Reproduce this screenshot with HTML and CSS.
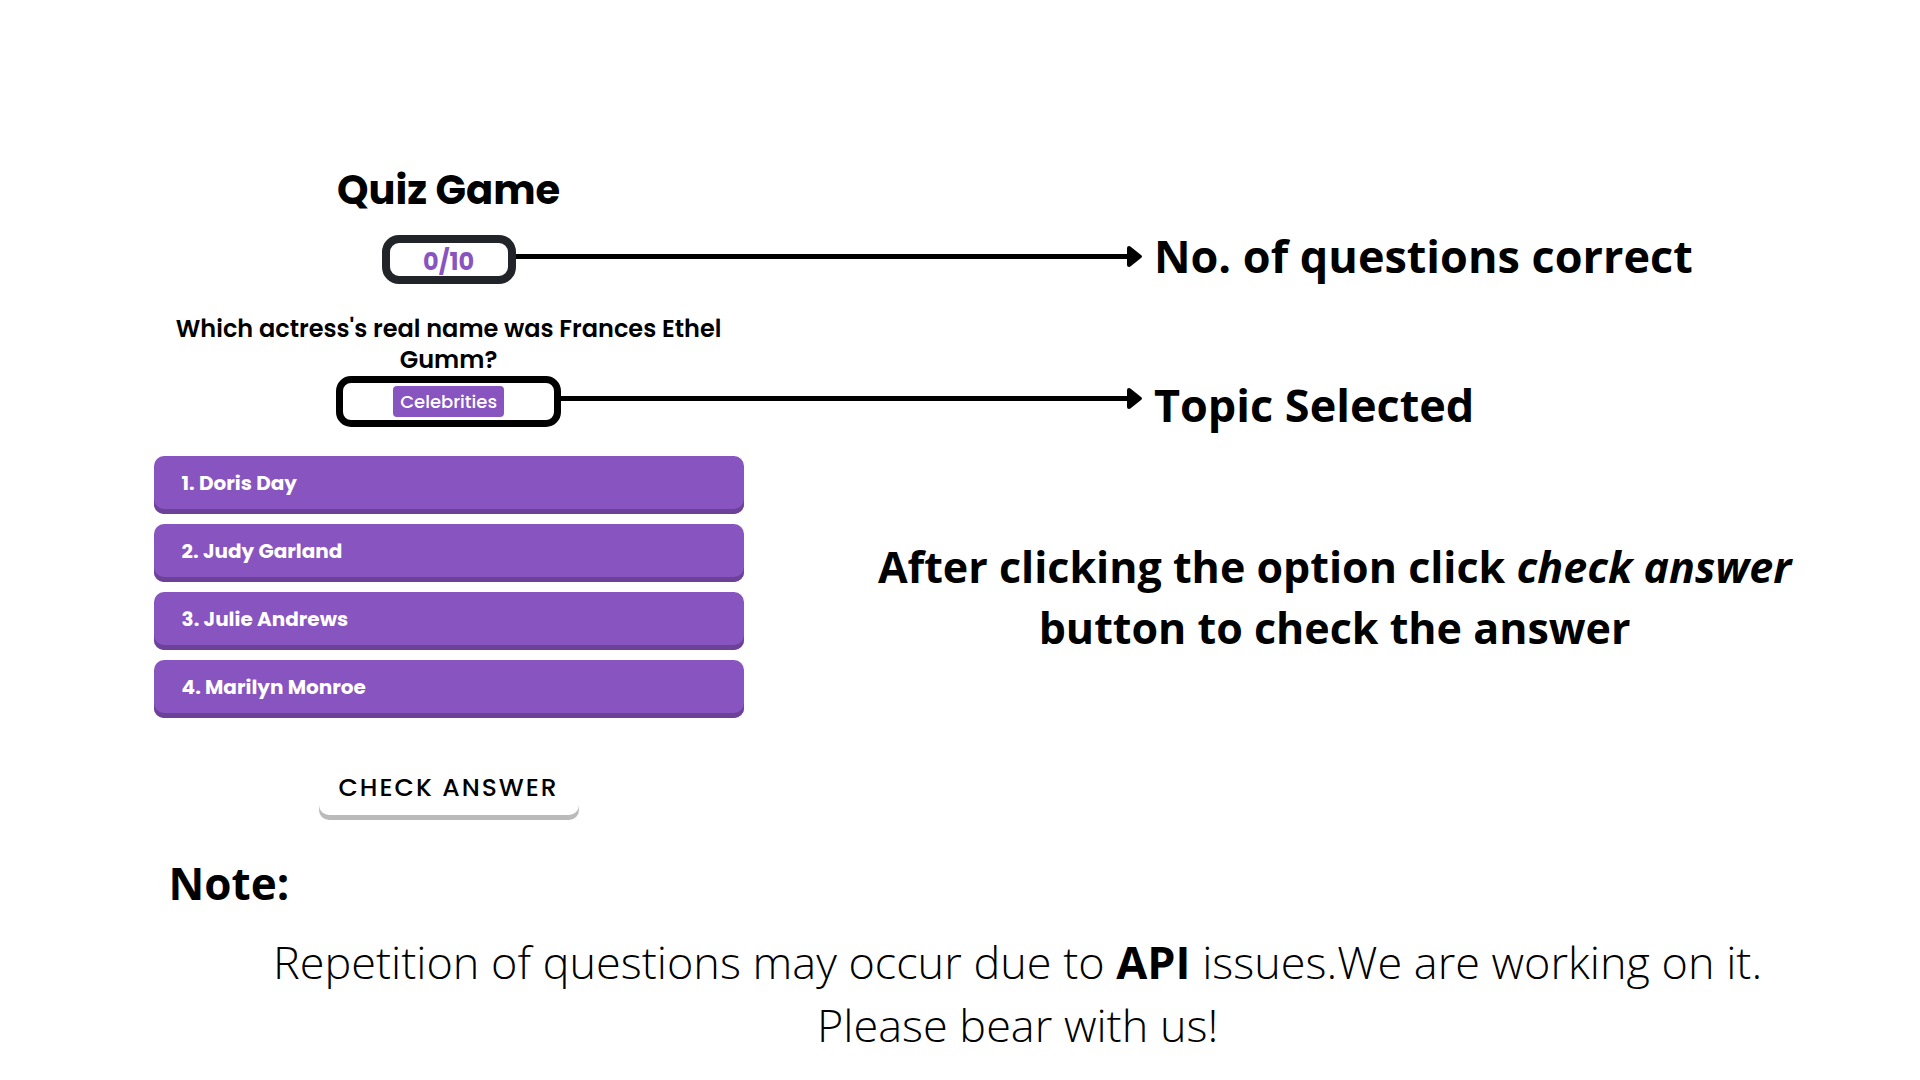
FILE: index.html
```html
<!DOCTYPE html>
<html lang="en">
<head>
<meta charset="utf-8">
<meta name="viewport" content="width=device-width, initial-scale=1">
<title>Quiz Game</title>
<link rel="stylesheet" href="styles.css">
</head>
<body>
<main class="guide">
  <section class="steps">
    <h1 class="title">Quiz Game</h1>

    <div class="score-row">
      <span class="pill pill-score">0/10</span>
      <span class="line"></span>
    </div>
    <div class="callout callout-score">
      <span class="arrow"><span class="line"></span><svg class="head" viewBox="0 0 15 21" aria-hidden="true"><path d="M0 2Q0 0 2 0Q3 0 4 1L14 9Q16 10.500 14 12L4 20Q3 21 2 21Q0 21 0 19Z"/></svg></span>
      <p class="label">No. of questions correct</p>
    </div>

    <h2 class="question">Which actress's real name was Frances Ethel Gumm?</h2>

    <div class="topic-row">
      <span class="pill pill-topic"><span class="tag">Celebrities</span></span>
      <span class="line"></span>
    </div>
    <div class="callout callout-topic">
      <span class="arrow"><span class="line"></span><svg class="head" viewBox="0 0 15 21" aria-hidden="true"><path d="M0 2Q0 0 2 0Q3 0 4 1L14 9Q16 10.500 14 12L4 20Q3 21 2 21Q0 21 0 19Z"/></svg></span>
      <p class="label">Topic Selected</p>
    </div>

    <div class="options">
      <button class="option" type="button">1. Doris Day</button>
      <button class="option" type="button">2. Judy Garland</button>
      <button class="option" type="button">3. Julie Andrews</button>
      <button class="option" type="button">4. Marilyn Monroe</button>
    </div>
    <p class="hint">After clicking the option click <em>check answer</em> <br>button to check the answer</p>

    <button class="check" type="button">CHECK ANSWER</button>
  </section>

  <section class="note">
    <h2 class="note-title">Note:</h2>
    <p class="note-text">Repetition of questions may occur due to <strong>API</strong> issues.We are working on it.<br>Please bear with us!</p>
  </section>
</main>
</body>
</html>
```
FILE: styles.css
```css
* {
  box-sizing: border-box;
}

body {
  margin: 0;
  background: #fff;
  color: #000;
  font-family: "Open Sans", sans-serif;
}

h1, h2, p {
  margin: 0;
}

.guide {
  padding: 160px 2% 0 8%;
}

.steps {
  display: grid;
  grid-template-columns: 590fr 1138fr;
  align-items: start;
}

.title,
.question,
.pill,
.tag,
.option,
.check {
  font-family: Poppins, Inter, sans-serif;
}

.title {
  grid-column: 1;
  font-size: 40px;
  line-height: 60px;
  font-weight: 700;
  text-align: center;
}

.score-row,
.topic-row {
  grid-column: 1;
  display: grid;
  grid-template-columns: 1fr auto 1fr;
  align-items: start;
}

.score-row {
  margin-top: 15px;
}

.topic-row {
  margin-top: 1px;
}

.score-row .pill,
.topic-row .pill {
  grid-column: 2;
}

.pill {
  display: flex;
  align-items: center;
  justify-content: center;
}

.pill-score {
  width: 134px;
  height: 49px;
  padding-top: 3px;
  border: 8px solid #212529;
  border-radius: 17px;
  color: #8854c0;
  font-size: 24px;
  font-weight: 700;
}

.pill-topic {
  width: 225px;
  height: 51px;
  border: 7px solid #000;
  border-radius: 15px;
}

.tag {
  padding: 0 7px;
  border-radius: 4px;
  background: #8854c0;
  color: #fff;
  font-size: 18px;
  line-height: 31px;
  font-weight: 500;
}

.line {
  flex: 1;
  height: 5px;
  background: #000;
}

.score-row .line {
  margin-top: 19px;
}

.topic-row .line {
  margin-top: 20px;
}

.callout {
  display: flex;
  align-items: start;
  gap: 12px;
}

.arrow {
  flex: 0 0 35%;
  display: flex;
  align-items: center;
}

.callout-score {
  padding-top: 6px;
}

.callout-score .arrow {
  margin-top: 20px;
}

.callout-topic .arrow {
  margin-top: 13px;
}

.head {
  width: 15px;
  height: 21px;
}

.label,
.hint,
.note-title {
  line-height: 61px;
  font-weight: 700;
}

.label {
  padding-bottom: 2px;
  font-size: 45px;
  line-height: 59px;
}

.question {
  grid-column: 1;
  margin-top: 26px;
  font-size: 24px;
  line-height: 31px;
  font-weight: 600;
  text-align: center;
}

.options {
  display: grid;
  gap: 10px;
  margin-top: 20px;
}

.option {
  height: 58px;
  padding: 0 28px 5px;
  border: 0;
  border-radius: 10px;
  background: #8854c0;
  box-shadow: inset 0 -5px #6c4298;
  color: #fff;
  font-size: 20px;
  font-weight: 700;
  text-align: left;
}

.hint {
  align-self: center;
  padding: 40px 0 0 44px;
  font-size: 43px;
  text-align: center;
}

.check {
  grid-column: 1;
  justify-self: center;
  height: 65px;
  margin-top: 37px;
  padding: 1px 20px 0;
  border: 0;
  border-radius: 10px;
  background: #fff;
  box-shadow: inset 0 -5px #bababa;
  color: #000;
  font-size: 25px;
  font-weight: 500;
  letter-spacing: 2px;
}

.note {
  margin-top: 33px;
}

.note-title {
  padding-left: 15px;
  font-size: 44px;
}

.note-text {
  margin-top: 16px;
  font-size: 45px;
  line-height: 63px;
  font-weight: 300;
  text-align: center;
}

.note-text strong {
  font-weight: 700;
}
```
